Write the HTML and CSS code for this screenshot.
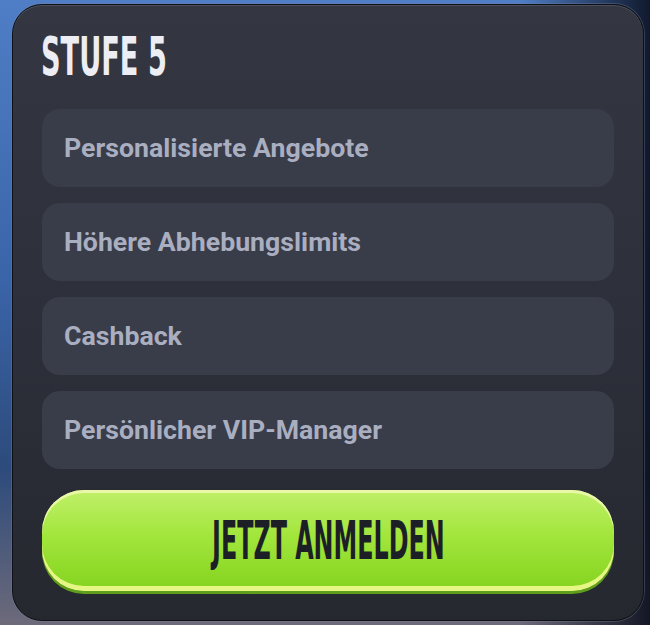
FILE: index.html
```html
<!DOCTYPE html>
<html lang="de">
  <head>
    <meta charset="UTF-8" />
    <title>Stufe 5</title>
    <link rel="stylesheet" href="styles.css">
  </head>
  <body>
    <div class="panel">
      <h2 class="title"><span>STUFE 5</span></h2>

      <ul class="perks">
        <li>Personalisierte Angebote</li>
        <li>Höhere Abhebungslimits</li>
        <li>Cashback</li>
        <li>Persönlicher VIP-Manager</li>
      </ul>

      <button class="signup"><span>JETZT ANMELDEN</span></button>
    </div>
  </body>
</html>
```

FILE: styles.css
```css
html,
body {
  margin: 0;
  height: 100%;
}

body {
  font-family: Roboto, "Liberation Sans", sans-serif;
  background:
    linear-gradient(90deg, rgba(0, 0, 0, 0) 80%, rgba(10, 14, 28, 0.9) 100%),
    linear-gradient(180deg, #4f7ec6 0%, #3a64a8 45%, #2d4b7c 75%, #6d6a7a 100%);
  padding: 4px 6px 4px 12px;
  box-sizing: border-box;
  overflow: hidden;
}

.panel {
  height: 617px;
  box-sizing: border-box;
  padding: 26px 29px 0 29px;
  border-radius: 30px;
  border: 1px solid #0e1016;
  background: linear-gradient(180deg, #343741 0%, #2d303a 50%, #262830 100%);
  box-shadow: inset 0 1px 0 #4b505e, 0 0 0 1px rgba(120, 130, 150, 0.35);
}

.title {
  margin: 0 0 0 -1px;
  height: 78px;
  font-family: "Liberation Sans Narrow", "DejaVu Sans Condensed", "Liberation Sans", sans-serif;
  font-weight: bold;
  font-size: 54px;
  line-height: 52px;
  color: #eceef3;
}

.title span {
  display: inline-block;
  transform: scaleX(0.56);
  transform-origin: left center;
}

.perks {
  list-style: none;
  margin: 0;
  padding: 0;
  display: flex;
  flex-direction: column;
  gap: 16px;
}

.perks li {
  height: 78px;
  display: flex;
  align-items: center;
  padding: 0 22px;
  border-radius: 18px;
  background: #393c49;
  color: #a9afc0;
  font-size: 26.7px;
  font-weight: bold;
}

.signup {
  display: block;
  width: 100%;
  height: 101px;
  margin-top: 21px;
  border: none;
  border-radius: 42px;
  background: linear-gradient(180deg, #c0f06a 0%, #a2e63c 45%, #84d31f 100%);
  box-shadow:
    inset 0 3px 0 #eaf7a8,
    inset 0 -5px 0 #e6f684,
    0 3px 0 #5f9e1a;
  color: #1d1f26;
  font-family: "Liberation Sans Narrow", "DejaVu Sans Condensed", "Liberation Sans", sans-serif;
  font-weight: bold;
  font-size: 54px;
  cursor: pointer;
}

.signup span {
  display: inline-block;
  transform: scaleX(0.49);
}
```
